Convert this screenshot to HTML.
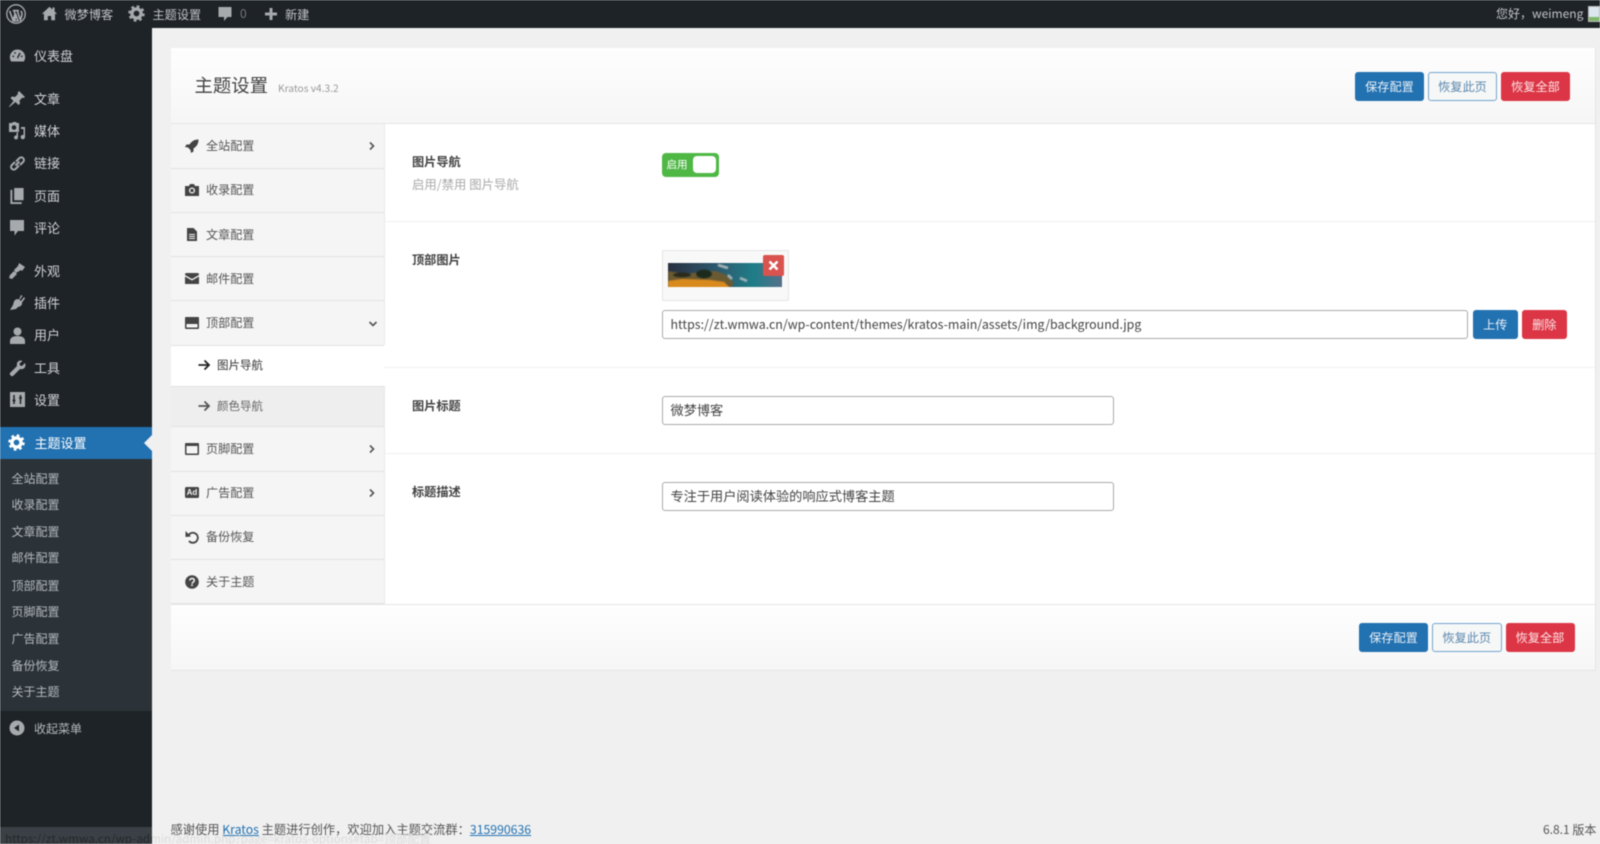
<!DOCTYPE html>
<html lang="zh-CN"><head><meta charset="utf-8"><title>主题设置</title>
<style>
*{box-sizing:border-box}
html,body{margin:0;padding:0;width:1600px;height:844px;overflow:hidden;background:#f0f0f1}
body{font-family:"Liberation Sans","Noto Sans CJK SC",sans-serif;position:relative;filter:blur(.4px)}
.a{position:absolute}
.t{position:absolute;white-space:nowrap;line-height:20px;height:20px;font-family:"Noto Sans CJK SC",sans-serif}
svg{position:absolute;display:block}
#bar{left:0;top:0;width:1600px;height:28px;background:#1d2327}
#side{left:0;top:28px;width:151.5px;height:816px;background:#1d2327}
#act{left:0;top:427px;width:151.5px;height:32px;background:#2271b1}
#sub{left:0;top:459px;width:151.5px;height:252px;background:#2c3338}
#arr{left:144px;top:435px;width:0;height:0;border:8px solid transparent;border-right-color:#f0f0f1;border-left:0}
.m{left:34px;font-size:13px;color:#d0d2d4}
.s{left:11.5px;font-size:12px;color:#b4b9be}
.b{font-size:12.2px;color:#c3c4c7}
#panel{left:170.5px;top:47.5px;width:1425.5px;height:623px;background:#fff;border:1px solid #e4e4e4}
.grad{background:linear-gradient(#fefefe,#f6f6f6)}
.nav{left:171px;width:213px;background:#f5f5f5;border-bottom:1px solid #e2e2e2}
.nl{left:206px;font-size:12.1px;color:#555}
.sep{left:384px;width:1211px;height:1px;background:#f0f0f0}
.lab{left:412px;font-size:12.2px;font-weight:700;color:#444}
.btn{position:absolute;height:29px;line-height:27px;text-align:center;font-size:12.2px;border-radius:3px;font-family:"Noto Sans CJK SC",sans-serif;border:1px solid}
.bb{background:#2271b1;border-color:#2271b1;color:#e8f0f7}
.bw{background:#f6f7f7;border-color:#73a5cf;color:#5b87ad}
.br{background:#dc3545;border-color:#dc3545;color:#fbe4e6}
.inp{position:absolute;background:#fff;border:1px solid #aaa;border-radius:3px;height:29px;line-height:26px;padding-left:7.5px;font-size:13.2px;color:#444;font-family:"Noto Sans CJK SC",sans-serif;white-space:nowrap}
</style></head><body>
<svg width="0" height="0" style="position:absolute"><defs>
<symbol id="gear" viewBox="0 0 20 20"><circle cx="10" cy="10" r="5.4" fill="none" stroke="currentColor" stroke-width="4"/><circle cx="10" cy="10" r="8.2" fill="none" stroke="currentColor" stroke-width="3" stroke-dasharray="3.2 3.24"/></symbol>
<symbol id="chev" viewBox="0 0 10 10"><path d="M3 1.5L6.5 5 3 8.5" fill="none" stroke="currentColor" stroke-width="1.6"/></symbol>
<symbol id="arrow" viewBox="0 0 14 14"><path d="M1.5 7H12M7.5 2.5L12 7l-4.500 4.500" fill="none" stroke="currentColor" stroke-width="1.800"/></symbol>
<filter id="soft"><feGaussianBlur stdDeviation=".5"/></filter>
</defs></svg>

<div class="a" id="bar"></div>
<div class="a" id="side"></div>
<div class="a" id="act"></div>
<div class="a" id="sub"></div>
<div class="a" id="arr"></div>

<!-- admin bar -->
<svg style="left:6px;top:4px" width="20" height="20" viewBox="0 0 20 20"><circle cx="10" cy="10" r="9.200" fill="none" stroke="#a7aaad" stroke-width="1.300"/><path d="M3.600 6.800l3.300 9.400 2.200-6.300-1.100-3.100M6.800 6.600h3.400M9.600 6.600h3.300M11.300 6.800l3.100 9.200 1.500-4.800c.4-1.700-.2-3.100-1-4.300M10.200 11.500l1.900 5.300-3.700.1z" fill="none" stroke="#a7aaad" stroke-width="1.600"/></svg>
<svg style="left:41px;top:5px" width="17" height="17" viewBox="0 0 20 20"><path d="M10 2L1 10.500h2.500V18H8v-5h4v5h4.500v-7.500H19l-3-2.800V3h-2.500v2.300z" fill="#a7aaad"/></svg>
<div class="t b" style="left:64.500px;top:4px">微梦博客</div>
<svg style="left:128px;top:5px;color:#a7aaad" width="17" height="17"><use href="#gear"/></svg>
<div class="t b" style="left:152.500px;top:4px">主题设置</div>
<svg style="left:217px;top:6px" width="16" height="17" viewBox="0 0 16 17"><path d="M1.500 1h13v10h-4l-3.500 4v-4H1.500z" fill="#a7aaad"/></svg>
<div class="t" style="left:240px;top:4px;font-size:12px;color:#777">0</div>
<svg style="left:264px;top:7px" width="14" height="14" viewBox="0 0 14 14"><path d="M7 1v12M1 7h12" stroke="#a7aaad" stroke-width="3"/></svg>
<div class="t b" style="left:285px;top:4px">新建</div>
<div class="t b" style="left:1496px;top:4px;font-size:12px">您好，weimeng</div>
<div class="a" style="left:1588px;top:6px;width:12px;height:16px;background:linear-gradient(#dbe6ee 70%,#7fb86a 70%);border:1px solid #bbb"></div>

<!-- side menu icons -->
<svg style="left:9px;top:47px" width="17" height="17" viewBox="0 0 20 20"><path d="M10 3a9 9 0 0 0-9 9c0 2 .7 3.800 1.600 5h14.800c.9-1.200 1.600-3 1.600-5a9 9 0 0 0-9-9z" fill="#a7aaad"/><path d="M10 13l3-6" stroke="#1d2327" stroke-width="1.600"/><circle cx="5" cy="11" r="1" fill="#1d2327"/><circle cx="15" cy="11" r="1" fill="#1d2327"/><circle cx="7" cy="7" r="1" fill="#1d2327"/></svg>
<div class="t m" style="top:46px">仪表盘</div>
<svg style="left:8px;top:90px" width="18" height="18" viewBox="0 0 18 18"><path d="M11 1l6 6-1.500 1-1-.5-3 3 .5 3-1.500 1.500-3-3L1.500 17 1 16.500l4.500-5.500-3-3L4 6.500l3 .5 3-3-.5-1z" fill="#a7aaad"/></svg>
<div class="t m" style="top:89px">文章</div>
<svg style="left:8px;top:122px" width="18" height="18" viewBox="0 0 18 18"><path d="M1 1h3l1-1h3l1 1h2v9H1z" fill="#a7aaad"/><circle cx="6" cy="5.500" r="2.300" fill="#1d2327"/><path d="M13 5h4v10a2.200 2.200 0 1 1-1.500-2V7H13zM10 12.500v3a2 2 0 1 1-1.500-2v-3H10z" fill="#a7aaad"/></svg>
<div class="t m" style="top:121px">媒体</div>
<svg style="left:9px;top:155px" width="17" height="17" viewBox="0 0 17 17"><path d="M7 6.500l3.500-3.500a2.700 2.700 0 0 1 3.800 3.800L11 10M10 10.500L6.500 14a2.700 2.700 0 0 1-3.800-3.800L6 7M6.500 10.500l4-4" fill="none" stroke="#a7aaad" stroke-width="2"/></svg>
<div class="t m" style="top:153px">链接</div>
<svg style="left:10px;top:188px" width="14" height="16" viewBox="0 0 14 17"><path d="M4 0h10v13H4z" fill="#a7aaad"/><path d="M2 2v13h10v2H0V2z" fill="#a7aaad"/></svg>
<div class="t m" style="top:186px">页面</div>
<svg style="left:10px;top:220px" width="14" height="16" viewBox="0 0 14 16"><path d="M0 0h14v11H8l-3.500 4.500V11H0z" fill="#a7aaad"/></svg>
<div class="t m" style="top:218px">评论</div>
<svg style="left:8px;top:262px" width="18" height="18" viewBox="0 0 18 18"><path d="M11 1l6 4-3 4-1-1-5 3-2-3 4-4zM6 9l3 3-5 5-3-1 1-3z" fill="#a7aaad"/></svg>
<div class="t m" style="top:261px">外观</div>
<svg style="left:9px;top:294px" width="17" height="17" viewBox="0 0 17 17"><path d="M12 1l1.500 1-3 4 1.500 1 3-4 1 1.500-3 4c.5 2-1 4-4 4.500L7 15 1 16l3-5 1-3.500c1-2 3-3 5-2z" fill="#a7aaad"/></svg>
<div class="t m" style="top:293px">插件</div>
<svg style="left:10px;top:327px" width="15" height="17" viewBox="0 0 15 17"><circle cx="7.500" cy="4.500" r="4" fill="#a7aaad"/><path d="M0 17v-3c0-3 2.500-5 7.500-5s7.500 2 7.500 5v3z" fill="#a7aaad"/></svg>
<div class="t m" style="top:325px">用户</div>
<svg style="left:9px;top:360px" width="17" height="17" viewBox="0 0 17 17"><path d="M16 3l-3 3-2-.5L10.500 3.500 13.500 1C10.500-.5 7 2 8 6L1 13c-1 1.500 1.500 4 3 3l7-7c4 1 6.500-2.500 5-6z" fill="#a7aaad"/></svg>
<div class="t m" style="top:358px">工具</div>
<svg style="left:10px;top:392px" width="15" height="15" viewBox="0 0 15 15"><path d="M0 0h15v15H0z" fill="#a7aaad"/><path d="M4 3v9M2.500 8.500H5.500M10.500 3v9M9 6h3" stroke="#1d2327" stroke-width="1.500"/></svg>
<div class="t m" style="top:390px">设置</div>
<svg style="left:8px;top:434px;color:#fff" width="17" height="17"><use href="#gear"/></svg>
<div class="t" style="left:34.500px;top:433px;font-size:13px;color:#fff">主题设置</div>
<div class="t s" style="top:468.500px">全站配置</div>
<div class="t s" style="top:495px">收录配置</div>
<div class="t s" style="top:521.500px">文章配置</div>
<div class="t s" style="top:548px">邮件配置</div>
<div class="t s" style="top:575.500px">顶部配置</div>
<div class="t s" style="top:602px">页脚配置</div>
<div class="t s" style="top:628.500px">广告配置</div>
<div class="t s" style="top:655.500px">备份恢复</div>
<div class="t s" style="top:682px">关于主题</div>
<svg style="left:9px;top:720px" width="16" height="16" viewBox="0 0 16 16"><circle cx="8" cy="8" r="7.500" fill="#a7aaad"/><path d="M10 4.500v7L5 8z" fill="#1d2327"/></svg>
<div class="t" style="left:34px;top:718.500px;font-size:12px;color:#b4b9be">收起菜单</div>

<!-- panel -->
<div class="a" id="panel"></div>
<div class="a grad" style="left:171px;top:48px;width:1424px;height:76px;border-bottom:1px solid #e6e6e6"></div>
<div class="t" style="left:194.500px;top:75px;font-size:18.400px;color:#444">主题设置</div>
<div class="t" style="left:278px;top:78px;font-size:10.200px;color:#999">Kratos v4.3.2</div>
<div class="btn bb" style="left:1355px;top:71.500px;width:69px">保存配置</div>
<div class="btn bw" style="left:1428px;top:71.500px;width:69px">恢复此页</div>
<div class="btn br" style="left:1501px;top:71.500px;width:69px">恢复全部</div>

<!-- nav -->
<div class="a nav" style="top:124px;height:44.500px"></div>
<div class="a nav" style="top:168.500px;height:44px"></div>
<div class="a nav" style="top:212.500px;height:44.500px"></div>
<div class="a nav" style="top:257px;height:44px"></div>
<div class="a nav" style="top:301px;height:44.500px"></div>
<div class="a" style="left:171px;top:345.500px;width:213px;height:41px;background:#fff;border-bottom:1px solid #e2e2e2"></div>
<div class="a" style="left:171px;top:386.500px;width:213px;height:40.500px;background:#eee;border-bottom:1px solid #e2e2e2"></div>
<div class="a nav" style="top:427px;height:44.500px"></div>
<div class="a nav" style="top:471.500px;height:44px"></div>
<div class="a nav" style="top:515.500px;height:44.500px"></div>
<div class="a nav" style="top:560px;height:44px"></div>
<div class="a" style="left:384px;top:124px;width:1px;height:221px;background:#e8e8e8"></div>
<div class="a" style="left:384px;top:386px;width:1px;height:218px;background:#e8e8e8"></div>

<svg style="left:185px;top:139px" width="14" height="14" viewBox="0 0 14 14"><path d="M13.500.5C9 .5 6.500 2.500 4.500 5.500H1.500L0 8l3 .5 2.500 2.500.5 3 2.500-1.500v-3C11.500 7.500 13.500 5 13.500.5z" fill="#444"/></svg>
<div class="t nl" style="top:136px">全站配置</div>
<svg style="left:367px;top:141px;color:#555" width="10" height="10"><use href="#chev"/></svg>
<svg style="left:185px;top:184px" width="14" height="12" viewBox="0 0 14 12"><path d="M0 2h4l1-2h4l1 2h4v10H0z" fill="#444"/><circle cx="7" cy="6.500" r="2.400" fill="none" stroke="#f5f5f5" stroke-width="1.300"/></svg>
<div class="t nl" style="top:180px">收录配置</div>
<svg style="left:187px;top:228px" width="10" height="13" viewBox="0 0 10 13"><path d="M0 0h6.500L10 3.500V13H0z" fill="#444"/><path d="M2 6.500h6M2 8.500h6M2 10.500h6" stroke="#f5f5f5"/></svg>
<div class="t nl" style="top:225px">文章配置</div>
<svg style="left:185px;top:273px" width="14" height="11" viewBox="0 0 14 11"><path d="M0 1.500A1.500 1.500 0 0 1 1.500 0h11A1.500 1.500 0 0 1 14 1.500v.5L7 6 0 2zM0 3.500l7 4 7-4V11H0z" fill="#444"/></svg>
<div class="t nl" style="top:269px">邮件配置</div>
<svg style="left:185px;top:317px" width="14" height="12" viewBox="0 0 14 12"><path d="M1 0h12a1 1 0 0 1 1 1v10a1 1 0 0 1-1 1H1a1 1 0 0 1-1-1V1a1 1 0 0 1 1-1z" fill="#444"/><path d="M1.500 7h11v3.500h-11z" fill="#f5f5f5"/></svg>
<div class="t nl" style="top:313px">顶部配置</div>
<svg style="left:368px;top:319px" width="10" height="10" viewBox="0 0 10 10"><path d="M1.500 3L5 6.500 8.500 3" fill="none" stroke="#555" stroke-width="1.600"/></svg>
<svg style="left:197px;top:358px;color:#222" width="14" height="14"><use href="#arrow"/></svg>
<div class="t" style="left:217px;top:355px;font-size:11.500px;color:#333">图片导航</div>
<svg style="left:197px;top:399px;color:#555" width="14" height="14"><use href="#arrow"/></svg>
<div class="t" style="left:217px;top:396px;font-size:11.500px;color:#666">颜色导航</div>
<svg style="left:185px;top:443px" width="14" height="12" viewBox="0 0 14 12"><path d="M1 0h12a1 1 0 0 1 1 1v10a1 1 0 0 1-1 1H1a1 1 0 0 1-1-1V1a1 1 0 0 1 1-1z" fill="#444"/><path d="M1.500 3h11v7.500h-11z" fill="#f5f5f5"/></svg>
<div class="t nl" style="top:438.500px">页脚配置</div>
<svg style="left:367px;top:444px;color:#555" width="10" height="10"><use href="#chev"/></svg>
<div class="a" style="left:185px;top:487px;width:14px;height:11px;background:#444;border-radius:1.500px;color:#f5f5f5;font:700 8px/11px 'Liberation Sans',sans-serif;text-align:center">Ad</div>
<div class="t nl" style="top:482.500px">广告配置</div>
<svg style="left:367px;top:488px;color:#555" width="10" height="10"><use href="#chev"/></svg>
<svg style="left:185px;top:530px" width="14" height="14" viewBox="0 0 14 14"><path d="M3 6.500A5 5 0 1 1 4 11" fill="none" stroke="#444" stroke-width="1.800"/><path d="M.5 1l0 6 5.500-.5z" fill="#444"/></svg>
<div class="t nl" style="top:527px">备份恢复</div>
<svg style="left:185px;top:575px" width="14" height="14" viewBox="0 0 14 14"><circle cx="7" cy="7" r="6.800" fill="#444"/><path d="M4.800 5.500C5 4 6 3.500 7 3.500c1.400 0 2.300.8 2.300 2 0 1.700-2.300 1.700-2.300 3.200" fill="none" stroke="#f5f5f5" stroke-width="1.500"/><path d="M6.200 9.500h1.600V11H6.200z" fill="#f5f5f5"/></svg>
<div class="t nl" style="top:571.500px">关于主题</div>

<!-- content -->
<div class="t lab" style="top:151px">图片导航</div>
<div class="t" style="left:412px;top:174px;font-size:12.400px;color:#aaa">启用/禁用 图片导航</div>
<div class="a" style="left:662px;top:152.500px;width:57px;height:24.500px;background:#4fb845;border-radius:4px"></div>
<div class="t" style="left:666.500px;top:155px;font-size:10.500px;color:#fff">启用</div>
<div class="a" style="left:692.500px;top:156px;width:23px;height:17px;background:#fff;border-radius:4px"></div>
<div class="a sep" style="top:221px"></div>
<div class="t lab" style="top:249px">顶部图片</div>
<div class="a" style="left:662px;top:250px;width:127px;height:51px;background:#f8f8f8;border:1px solid #e4e4e4;border-radius:2px"></div>
<svg style="left:668px;top:263px" width="114" height="24" viewBox="0 0 114 24"><defs><linearGradient id="g1" x1="0" x2="1" y1="0" y2="0"><stop offset="0" stop-color="#2a3040"/><stop offset=".45" stop-color="#2d5a70"/><stop offset=".75" stop-color="#1f7d88"/><stop offset="1" stop-color="#56708a"/></linearGradient><clipPath id="c1"><rect width="114" height="24"/></clipPath></defs><g clip-path="url(#c1)"><rect width="114" height="24" fill="url(#g1)"/><g filter="url(#soft)"><path d="M0 8l18 3 14-2 16-1 10 4 8 8-4 6H0z" fill="#6b5a30"/><path d="M0 18l14-2 28 1 14 2 6 6H0z" fill="#d98a1c"/><ellipse cx="14" cy="12" rx="9" ry="2.500" fill="#2c2b1e"/><ellipse cx="36" cy="11" rx="8" ry="4.500" fill="#1f2a1e"/><path d="M50 2l10 3M72 15l7 3M60 12l4 4" stroke="#a9b8bb" stroke-width="2.500"/></g></g></svg>
<div class="a" style="left:763px;top:255px;width:21px;height:21px;background:#d9534f;border-radius:2px"></div>
<svg style="left:768px;top:260px" width="11" height="11" viewBox="0 0 11 11"><path d="M1.500 1.500l8 8M9.500 1.500l-8 8" stroke="#fff" stroke-width="2.600"/></svg>
<div class="inp" style="left:662px;top:310px;width:806px;font-size:12.400px;line-height:27px">https://zt.wmwa.cn/wp-content/themes/kratos-main/assets/img/background.jpg</div>
<div class="btn bb" style="left:1473px;top:310px;width:44.500px">上传</div>
<div class="btn br" style="left:1522px;top:310px;width:44.500px">删除</div>
<div class="a sep" style="top:367px"></div>
<div class="t lab" style="top:395px">图片标题</div>
<div class="inp" style="left:662px;top:396px;width:452px">微梦博客</div>
<div class="a sep" style="top:453px"></div>
<div class="t lab" style="top:481px">标题描述</div>
<div class="inp" style="left:662px;top:482px;width:452px">专注于用户阅读体验的响应式博客主题</div>

<div class="a grad" style="left:171px;top:603.500px;width:1424px;height:66.500px;border-top:1px solid #e6e6e6"></div>
<div class="btn bb" style="left:1359px;top:623px;width:69px">保存配置</div>
<div class="btn bw" style="left:1432px;top:623px;width:69.500px">恢复此页</div>
<div class="btn br" style="left:1505.500px;top:623px;width:69px">恢复全部</div>

<!-- footer -->
<div class="t" style="left:170.500px;top:819px;font-size:12.250px;color:#555">感谢使用 <span style="color:#2271b1;text-decoration:underline">Kratos</span> 主题进行创作，欢迎加入主题交流群：<span style="color:#2271b1;text-decoration:underline">315990636</span></div>
<div class="t" style="left:1543px;top:819.500px;font-size:12px;color:#555">6.8.1 版本</div>
<div class="a" style="left:0;top:827px;width:151.500px;height:17px;background:#3a4045;overflow:hidden"><div class="t" style="left:5px;top:2px;font-size:11.700px;color:#23282c">https://zt.wmwa.cn/wp-admin/admin.php?page=kratos-options#tab=顶部配置</div></div>
<div class="a" style="left:151.500px;top:827px;width:300px;height:17px;overflow:hidden"><div class="t" style="left:-146.500px;top:2px;font-size:11.700px;color:#dcdcdc">https://zt.wmwa.cn/wp-admin/admin.php?page=kratos-options#tab=顶部配置</div></div>
</body></html>
